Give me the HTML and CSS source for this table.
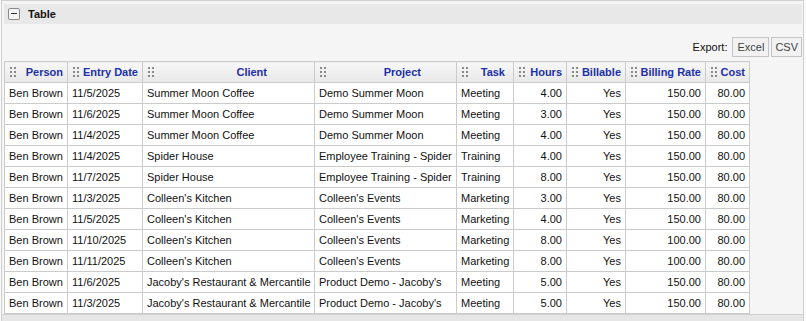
FILE: index.html
```html
<!DOCTYPE html>
<html>
<head>
<meta charset="utf-8">
<link rel="stylesheet" href="styles.css">
</head>
<body>
<div class="panel">
  <div class="panel-head">
    <span class="toggle"></span>
    <span class="title">Table</span>
  </div>
  <div class="panel-body">
    <div class="export">
      <span class="export-label">Export:</span>
      <button class="btn">Excel</button>
      <button class="btn btn-narrow">CSV</button>
    </div>
    <table class="grid">
      <thead>
        <tr>
          <th class="w-person"><span class="grip"></span><span class="lbl">Person</span></th>
          <th class="w-date"><span class="grip"></span><span class="lbl">Entry Date</span></th>
          <th class="w-client"><span class="grip"></span><span class="lbl l-client">Client</span></th>
          <th class="w-project"><span class="grip"></span><span class="lbl l-project">Project</span></th>
          <th class="w-task"><span class="grip"></span><span class="lbl l-task">Task</span></th>
          <th class="w-hours"><span class="grip"></span><span class="lbl">Hours</span></th>
          <th class="w-bill"><span class="grip"></span><span class="lbl">Billable</span></th>
          <th class="w-rate"><span class="grip"></span><span class="lbl">Billing Rate</span></th>
          <th class="w-cost"><span class="grip"></span><span class="lbl">Cost</span></th>
        </tr>
      </thead>
      <tbody>
        <tr><td>Ben Brown</td><td>11/5/2025</td><td>Summer Moon Coffee</td><td>Demo Summer Moon</td><td>Meeting</td><td class="num">4.00</td><td class="num">Yes</td><td class="num">150.00</td><td class="num">80.00</td></tr>
        <tr><td>Ben Brown</td><td>11/6/2025</td><td>Summer Moon Coffee</td><td>Demo Summer Moon</td><td>Meeting</td><td class="num">3.00</td><td class="num">Yes</td><td class="num">150.00</td><td class="num">80.00</td></tr>
        <tr><td>Ben Brown</td><td>11/4/2025</td><td>Summer Moon Coffee</td><td>Demo Summer Moon</td><td>Meeting</td><td class="num">4.00</td><td class="num">Yes</td><td class="num">150.00</td><td class="num">80.00</td></tr>
        <tr><td>Ben Brown</td><td>11/4/2025</td><td>Spider House</td><td>Employee Training - Spider</td><td>Training</td><td class="num">4.00</td><td class="num">Yes</td><td class="num">150.00</td><td class="num">80.00</td></tr>
        <tr><td>Ben Brown</td><td>11/7/2025</td><td>Spider House</td><td>Employee Training - Spider</td><td>Training</td><td class="num">8.00</td><td class="num">Yes</td><td class="num">150.00</td><td class="num">80.00</td></tr>
        <tr><td>Ben Brown</td><td>11/3/2025</td><td>Colleen's Kitchen</td><td>Colleen's Events</td><td>Marketing</td><td class="num">3.00</td><td class="num">Yes</td><td class="num">150.00</td><td class="num">80.00</td></tr>
        <tr><td>Ben Brown</td><td>11/5/2025</td><td>Colleen's Kitchen</td><td>Colleen's Events</td><td>Marketing</td><td class="num">4.00</td><td class="num">Yes</td><td class="num">150.00</td><td class="num">80.00</td></tr>
        <tr><td>Ben Brown</td><td>11/10/2025</td><td>Colleen's Kitchen</td><td>Colleen's Events</td><td>Marketing</td><td class="num">8.00</td><td class="num">Yes</td><td class="num">100.00</td><td class="num">80.00</td></tr>
        <tr><td>Ben Brown</td><td>11/11/2025</td><td>Colleen's Kitchen</td><td>Colleen's Events</td><td>Marketing</td><td class="num">8.00</td><td class="num">Yes</td><td class="num">100.00</td><td class="num">80.00</td></tr>
        <tr><td>Ben Brown</td><td>11/6/2025</td><td>Jacoby's Restaurant &amp; Mercantile</td><td>Product Demo - Jacoby's</td><td>Meeting</td><td class="num">5.00</td><td class="num">Yes</td><td class="num">150.00</td><td class="num">80.00</td></tr>
        <tr><td>Ben Brown</td><td>11/3/2025</td><td>Jacoby's Restaurant &amp; Mercantile</td><td>Product Demo - Jacoby's</td><td>Meeting</td><td class="num">5.00</td><td class="num">Yes</td><td class="num">150.00</td><td class="num">80.00</td></tr>
      </tbody>
    </table>
  </div>
  <div class="panel-foot"></div>
</div>
</body>
</html>
```
FILE: styles.css
```css
html, body {
  margin: 0;
  padding: 0;
  background: #fafafa;
  font-family: "Liberation Sans", Arial, sans-serif;
  font-size: 11px;
  color: #111;
}
.panel {
  width: 801px;
  margin-left: 1px;
  border: 1px solid #cfcfcf;
  border-bottom: none;
  background: #f5f5f5;
}
.panel-head {
  margin: 3px 1px 0 2px;
  height: 20px;
  background: #e8e8e8;
  display: flex;
  align-items: center;
}
.toggle {
  position: relative;
  box-sizing: border-box;
  width: 12px;
  height: 12px;
  margin-left: 4px;
  border: 1px solid #8a8a8a;
  border-radius: 2px;
  background: #f4f4f4;
}
.toggle::after {
  content: "";
  position: absolute;
  left: 2px;
  right: 2px;
  top: 4px;
  height: 1px;
  background: #333;
}
.title {
  margin-left: 8px;
  font-weight: bold;
  color: #111;
}
.panel-body {
  padding: 12px 0 0 2px;
}
.export {
  display: flex;
  justify-content: flex-end;
  align-items: center;
  gap: 2px;
  padding-right: 1px;
  height: 21px;
}
.export-label {
  margin-right: 3px;
  color: #111;
}
.btn {
  font-family: "Liberation Sans", Arial, sans-serif;
  font-size: 11px;
  color: #444;
  background: #f2f2f2;
  border: 1px solid #c4c4c4;
  height: 20px;
  padding: 0 4px;
  margin: 0;
}
.btn-narrow { padding: 0 3px; }
.grid {
  margin-top: 4px;
  border-collapse: collapse;
  table-layout: fixed;
  width: 746px;
  background: #fff;
}
.grid th, .grid td {
  border: 1px solid #cbcbcb;
  height: 21px;
  padding: 0 4px;
  white-space: nowrap;
  overflow: hidden;
  box-sizing: border-box;
}
.grid th {
  background: linear-gradient(#f7f7f7, #e8e8e8);
  color: #2030a8;
  font-weight: bold;
  text-align: right;
  padding-right: 4px;
}
.grid td.num { text-align: right; }
.grip {
  float: left;
  width: 6px;
  height: 10px;
  margin-top: 1px;
  margin-left: 1px;
  background-image: radial-gradient(circle at 1px 1px, #8a8a8a 0.9px, transparent 1.2px);
  background-size: 4px 4px;
  background-position: 0 0;
}
.l-client { margin-right: 43px; }
.l-project { margin-right: 31px; }
.l-task { margin-right: 4px; }
.w-person { width: 63px; }
.w-date { width: 75px; }
.w-client { width: 172px; }
.w-project { width: 142px; }
.w-task { width: 57px; }
.w-hours { width: 53px; }
.w-bill { width: 59px; }
.w-rate { width: 80px; }
.w-cost { width: 44px; }
.panel-foot {
  height: 8px;
  border-top: 1px solid #d0d0d0;
  background: #e6e6e6;
}
```
